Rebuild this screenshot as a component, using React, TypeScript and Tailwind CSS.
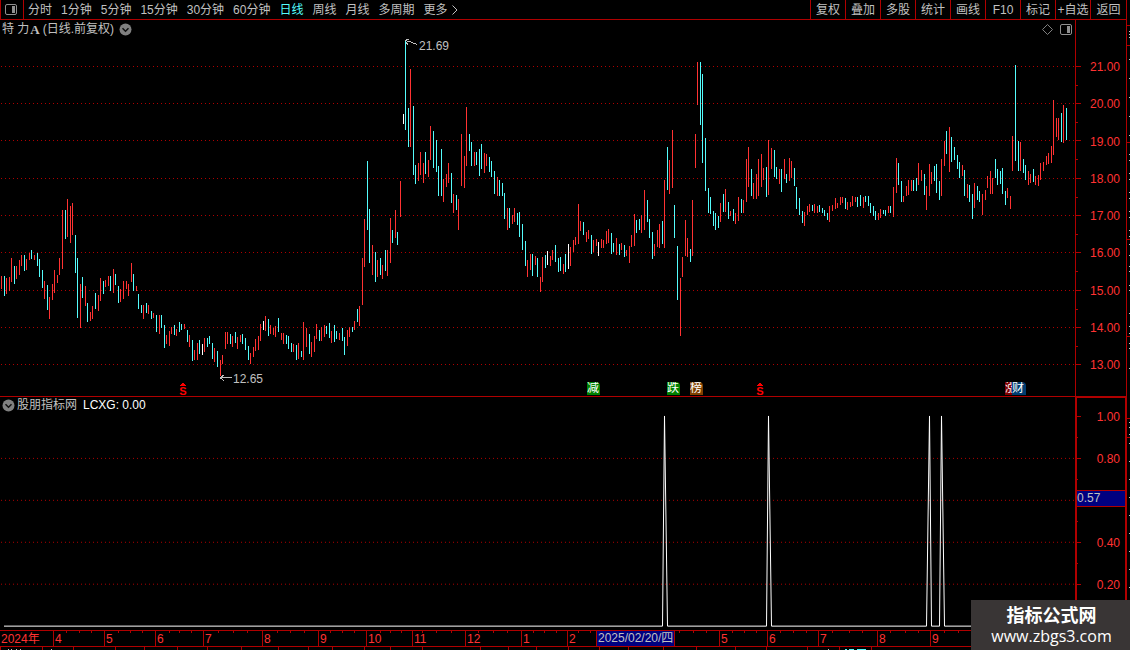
import React from "react";

const PLOT_WIDTH = 1075;
const AXIS_WIDTH = 1126;

const periods = [
  "分时",
  "1分钟",
  "5分钟",
  "15分钟",
  "30分钟",
  "60分钟",
  "日线",
  "周线",
  "月线",
  "多周期",
];

const tools = ["复权", "叠加", "多股", "统计", "画线", "F10", "标记", "+自选", "返回"];

const prices = ["21.00", "20.00", "19.00", "18.00", "17.00", "16.00", "15.00", "14.00", "13.00"];
const priceLines = [66, 103, 140, 178, 215, 252, 290, 327, 364];
const priceHalfTicks = [85, 122, 159, 197, 234, 271, 309, 346];

const signalLines = [458, 500, 542, 584];
const signalHalfTicks = [437, 479, 521, 563, 605];

// x, high, low, r = up / c = down / w = unchanged
const bars = `
1 276 289 r,4 276 296 c,6 278 294 r,9 277 291 r,11 258 282 r,14 266 284 c,16 266 279 r,19 260 275 r,
21 255 266 r,24 255 271 c,26 259 270 r,29 253 260 r,31 250 259 c,34 255 260 r,37 253 266 c,39 259 277 c,
42 270 288 c,44 281 299 r,47 285 310 c,49 297 319 r,52 284 300 r,54 270 293 r,57 275 283 r,59 258 275 r,
62 210 269 r,65 210 239 c,67 199 237 r,70 206 243 r,72 203 235 r,75 235 273 c,77 258 318 c,80 284 328 r,
82 277 298 c,85 286 306 r,87 303 322 c,90 312 321 r,92 306 319 r,95 293 309 c,98 295 311 r,100 278 301 r,
103 281 294 c,105 280 287 r,108 276 286 r,110 276 291 c,113 269 293 r,115 274 285 c,118 286 303 c,120 289 302 r,
123 281 299 r,126 281 289 r,128 284 296 r,131 263 282 r,133 274 291 c,136 286 291 r,138 294 309 c,141 305 313 c,
143 305 319 r,146 303 313 c,148 305 314 r,151 311 319 c,153 313 318 r,156 315 332 c,159 315 334 r,161 315 328 c,
164 325 348 c,166 335 344 r,169 331 346 r,171 327 334 r,174 325 335 c,176 329 336 r,179 322 332 c,181 324 330 c,
184 324 329 r,187 330 342 c,189 335 347 r,192 340 361 c,194 350 360 r,197 343 360 r,199 340 354 c,202 344 355 w,
204 338 352 r,207 338 347 c,209 336 344 c,212 343 359 c,214 348 362 r,217 351 367 c,220 360 376 r,222 355 364 r,
225 332 349 r,227 332 344 r,230 334 344 c,232 336 347 r,235 332 343 c,237 337 349 r,240 335 342 r,242 334 344 c,
245 338 350 c,248 346 360 c,250 353 364 r,253 347 357 r,255 339 351 r,258 336 350 r,260 324 341 r,263 321 330 w,
265 316 331 r,268 319 336 c,270 325 334 r,273 328 335 r,275 326 337 r,278 318 332 c,281 333 340 r,283 333 344 r,
286 335 344 c,288 336 349 c,291 343 352 c,293 344 352 r,296 345 360 c,298 343 359 r,301 351 357 c,303 322 360 r,
306 328 347 r,309 334 354 c,311 342 357 r,314 336 352 r,316 324 339 r,319 330 341 c,321 327 341 r,324 325 337 r,
326 326 334 c,329 323 338 c,331 331 343 r,334 325 342 c,336 331 339 c,339 333 340 r,342 328 341 c,344 337 355 c,
347 330 346 r,349 327 337 r,352 327 332 c,354 321 330 r,357 309 322 c,359 306 326 r,362 258 305 r,364 219 267 r,
367 161 230 c,369 209 263 c,372 245 275 r,375 252 282 c,377 260 277 r,380 258 275 c,382 265 279 r,385 250 271 c,
387 250 276 r,390 218 263 r,392 230 243 c,395 210 238 r,397 232 245 c,400 181 217 r,403 114 124 w,405 41 130 c,
408 108 147 c,410 69 147 r,413 106 175 c,415 165 184 c,418 163 181 r,420 152 175 r,423 163 183 r,425 152 174 c,
428 160 177 r,430 126 160 r,433 131 168 c,436 140 172 c,438 166 196 c,441 149 196 c,443 179 202 r,446 174 187 r,
448 163 183 r,451 173 203 c,453 194 213 r,456 195 210 c,458 199 230 r,461 134 186 r,464 156 188 r,466 107 166 r,
469 134 151 c,471 142 166 c,474 152 166 r,476 152 165 c,479 149 176 c,481 144 169 c,484 153 173 r,486 154 166 r,
489 157 172 c,491 161 177 c,494 171 194 c,497 177 196 r,499 180 196 c,502 183 196 c,504 193 219 c,507 208 230 r,
509 208 228 c,512 215 224 r,514 208 222 r,517 213 225 c,519 212 237 c,522 224 250 c,525 241 266 c,527 260 277 r,
530 254 270 r,532 254 276 c,535 256 265 r,537 258 277 c,540 277 292 r,542 257 282 r,545 255 268 c,547 251 265 w,
550 256 266 r,552 250 260 r,555 245 262 c,558 258 272 c,560 257 271 c,563 264 274 r,565 254 272 c,568 244 269 w,
570 247 266 r,573 240 252 r,575 237 245 r,578 204 244 r,580 221 231 r,583 222 235 c,586 232 242 r,588 230 239 r,
591 235 254 c,593 240 252 r,596 239 246 r,598 242 256 w,601 239 248 r,603 240 248 r,606 231 244 r,608 229 243 r,
611 233 254 c,613 243 252 c,616 238 255 r,619 244 255 c,621 243 250 r,624 245 257 c,626 250 256 r,629 246 263 r,
631 235 247 r,634 214 246 r,636 220 233 c,639 219 230 c,641 215 233 r,644 190 230 r,647 200 222 c,649 219 238 c,
652 232 259 c,654 244 256 r,657 230 247 r,659 224 248 r,662 221 244 c,664 180 248 r,667 147 190 c,669 160 194 r,
672 130 188 r,674 205 238 c,677 246 300 c,680 278 336 r,682 257 277 r,685 220 256 r,687 238 257 r,690 249 262 c,
692 200 256 r,695 134 168 r,697 62 105 r,700 62 125 c,702 74 163 c,705 138 191 c,708 188 213 c,710 197 214 c,
713 211 226 c,715 213 230 c,718 216 228 c,720 203 222 r,723 194 212 c,725 189 212 r,728 202 219 c,730 211 216 r,
733 209 221 c,735 213 224 r,738 197 221 r,741 199 213 c,743 200 213 r,746 159 202 r,748 147 187 r,751 169 196 c,
753 183 199 r,756 174 199 r,758 159 196 r,761 154 187 r,763 168 180 r,766 167 197 c,768 140 195 r,771 148 169 r,
774 150 177 c,776 167 179 c,779 169 184 r,781 169 192 c,784 159 179 r,786 174 183 c,789 158 181 r,791 161 178 r,
794 168 186 c,796 187 209 c,799 198 215 c,802 211 223 c,804 212 226 r,807 206 215 r,809 204 212 r,812 205 211 c,
814 204 213 r,817 206 213 r,819 205 212 c,822 208 213 c,824 210 216 c,827 213 220 c,829 206 222 r,832 205 211 r,
835 198 209 r,837 203 208 r,840 197 205 r,842 197 203 r,845 198 209 c,847 202 210 r,850 202 207 r,852 196 206 r,
855 197 202 r,857 197 207 c,860 195 206 c,863 197 208 r,865 196 202 c,868 196 206 c,870 203 213 c,873 206 216 c,
875 211 220 c,878 213 220 r,880 209 218 r,883 210 214 c,885 210 216 c,888 206 213 r,890 206 213 c,893 187 217 r,
896 158 193 r,898 163 185 c,901 181 202 c,903 196 202 r,906 186 196 r,908 180 195 r,911 180 191 r,913 180 191 c,
916 178 191 c,918 163 185 r,921 170 181 r,924 174 195 c,926 186 210 r,929 164 196 r,931 172 184 r,934 166 181 c,
936 164 193 c,939 181 200 c,941 159 196 r,944 141 166 r,946 131 154 c,949 127 172 r,951 137 162 c,954 147 160 c,
957 155 169 c,959 162 178 c,962 165 176 r,964 170 196 c,967 184 198 r,969 185 202 c,972 194 219 c,974 183 208 r,
977 186 200 c,979 191 202 c,982 194 215 r,985 190 200 r,987 176 188 r,990 171 194 r,992 178 194 r,995 159 178 c,
997 169 185 c,1000 171 184 c,1002 168 194 c,1005 191 205 c,1007 188 198 r,1010 196 209 r,1012 136 171 r,1015 65 161 c,
1018 141 171 c,1020 142 171 r,1023 159 173 c,1025 165 180 c,1028 171 185 r,1030 174 183 r,1033 169 182 c,1035 176 185 r,
1038 175 186 r,1040 163 180 r,1043 162 171 r,1046 156 165 r,1048 153 164 r,1051 146 163 r,1053 100 155 r,1056 118 137 r,
1058 118 140 r,1061 113 142 c,1063 105 143 r,1066 108 140 c`
  .split(",")
  .map((row) => {
    const [x, high, low, kind] = row.trim().split(" ");
    return { x: Number(x), high: Number(high), low: Number(low), kind };
  });

const barFill: Record<string, string> = {
  r: "fill-[#ff3232]",
  c: "fill-[#54fcfc]",
  w: "fill-white",
};

const months = [
  { label: "2024年", start: 0, end: 53 },
  { label: "4", start: 53, end: 104 },
  { label: "5", start: 104, end: 155 },
  { label: "6", start: 155, end: 203 },
  { label: "7", start: 203, end: 262 },
  { label: "8", start: 262, end: 318 },
  { label: "9", start: 318, end: 366 },
  { label: "10", start: 366, end: 412 },
  { label: "11", start: 412, end: 465 },
  { label: "12", start: 465, end: 521 },
  { label: "1", start: 521, end: 567 },
  { label: "2", start: 567, end: 596 },
  { label: "2025/02/20/四", start: 596, end: 674, current: true },
  { label: "", start: 674, end: 719 },
  { label: "5", start: 719, end: 767 },
  { label: "6", start: 767, end: 818 },
  { label: "7", start: 818, end: 877 },
  { label: "8", start: 877, end: 930 },
  { label: "9", start: 930, end: 1126 },
];

const weekTicks = [
  66, 79, 91, 118, 130, 142, 169, 179, 191, 218, 233, 247, 277, 290, 304, 330, 342, 354, 380, 390,
  401, 422, 436, 451, 478, 493, 507, 533, 544, 556, 578, 590, 679, 693, 706, 732, 744, 756, 780, 793,
  806, 832, 849, 862, 890, 905, 918, 944, 958,
];

const footerTicks = [
  0, 42, 73, 115, 144, 177, 207, 241, 278, 308, 332, 364, 390, 422, 480, 508, 536, 568, 599, 628, 663,
  696, 735, 766, 807, 839, 871,
];

const sideLines = [25, 45, 142, 239, 336, 418, 437];
const sideDots = [
  31, 34, 37, 59, 78, 97, 116, 135, 154, 160, 173, 179, 192, 198, 211, 217, 230, 236, 244, 255, 266,
  271, 285, 290, 313, 326, 333, 343, 348, 368, 422, 427, 434, 443, 461, 479, 497, 515, 533, 551, 569,
  587,
];

const badges = [
  { label: "减", x: 587, look: "w-[13px] rounded-tr-sm bg-[#008000]" },
  { label: "跌", x: 667, look: "w-[13px] rounded-tr-sm bg-[#008000]" },
  { label: "榜", x: 690, look: "w-[13px] rounded-tr-sm bg-[#804000]" },
  { label: "涨", x: 1005, look: "w-[7px] bg-[#800000]" },
  { label: "财", x: 1012, look: "w-[14px] rounded-tr-sm bg-[#003c70]" },
];

const left = (x: number) => ({ left: `${(x / PLOT_WIDTH) * 100}%` });

const PanelIcon = () => (
  <svg width="12" height="11" viewBox="0 0 12 11" fill="none">
    <rect x="0.5" y="0.5" width="11" height="10" rx="1.5" stroke="#909090" />
    <rect x="7" y="2" width="3" height="7" fill="#909090" />
  </svg>
);

const CollapseIcon = () => (
  <svg width="13" height="13" viewBox="0 0 13 13" fill="none">
    <circle cx="6.5" cy="6.5" r="6" fill="#808080" />
    <path d="M3.5 5.2 L6.5 8.2 L9.5 5.2" stroke="#101010" strokeWidth="1.5" />
  </svg>
);

const GridLines = ({ rows }: { rows: number[] }) => (
  <>
    {rows.map((y) => (
      <line
        key={y}
        x1="1"
        x2={PLOT_WIDTH}
        y1={y + 0.5}
        y2={y + 0.5}
        stroke="#b00000"
        strokeDasharray="1 3"
      />
    ))}
  </>
);

const Toolbar = () => (
  <header className="flex h-5 shrink-0 justify-between border-b border-[#b00000]">
    <div className="flex">
      <button
        aria-label="侧栏"
        className="flex w-6 items-center border-x border-[#b00000] pl-1"
      >
        <PanelIcon />
      </button>
      <nav className="flex items-center gap-[9px] pl-1 leading-[18px]">
        {periods.map((p) => (
          <button key={p} className={p === "日线" ? "text-[#54fcfc]" : ""}>
            {p}
          </button>
        ))}
        <button className="flex items-center gap-1">
          更多
          <svg width="6" height="10" viewBox="0 0 6 10" fill="none">
            <path d="M0.5 0.5 L5 5 L0.5 9.5" stroke="currentColor" />
          </svg>
        </button>
      </nav>
    </div>
    <nav className="flex leading-[18px]">
      {tools.map((t) => (
        <button
          key={t}
          className="w-[35px] whitespace-nowrap border-l border-[#b00000] text-center last:w-9"
        >
          {t}
        </button>
      ))}
    </nav>
  </header>
);

const DividendMark = ({ x }: { x: number }) => (
  <div
    className="absolute bottom-0 flex w-2 flex-col items-center text-[#ff0000]"
    style={left(x)}
  >
    <svg width="6" height="4" viewBox="0 0 6 4" shapeRendering="crispEdges">
      <path d="M2 0h2v1h1v1h1v1H0V2h1V1h1z" fill="currentColor" />
    </svg>
    <span className="text-[11px] font-bold leading-[9px]">S</span>
  </div>
);

const PricePane = () => (
  <section className="flex min-h-0 flex-[377] border-b border-[#b00000]">
    <div className="relative min-w-0 flex-1">
      <svg
        className="absolute inset-0 h-full w-full"
        viewBox="0 20 1075 376"
        preserveAspectRatio="none"
        shapeRendering="crispEdges"
      >
        <GridLines rows={priceLines} />
        {bars.map((b) => (
          <rect
            key={b.x}
            x={b.x}
            y={b.high}
            width="1"
            height={b.low - b.high}
            className={barFill[b.kind]}
          />
        ))}
        <g fill="none" stroke="#c0c0c0">
          <path d="M405.5 40.5 L411 42 L417 44.5 M409 39.5 H406 M406 42 L408 45" />
          <path d="M220 377.5 H232 M224 374.5 L220.5 377.5 L224 380.5" />
        </g>
      </svg>
      <div className="relative flex h-[19px] items-center justify-between pl-[2px] pr-[3px]">
        <h1 className="flex items-center">
          特&nbsp;力
          <span className="px-px font-['Liberation_Serif'] text-[13px] font-bold">A</span>
          <span className="pl-[2px]">(日线.前复权)</span>
          <button aria-label="展开" className="pl-[5px]">
            <CollapseIcon />
          </button>
        </h1>
        <div className="flex items-center gap-[7px]">
          <svg width="11" height="11" viewBox="0 0 11 11" fill="none">
            <path d="M5.5 0.5 L10.5 5.5 L5.5 10.5 L0.5 5.5 Z" stroke="#808080" />
          </svg>
          <PanelIcon />
        </div>
      </div>
      <span className="absolute top-[18px] leading-4" style={left(419)}>
        21.69
      </span>
      <span className="absolute bottom-[9px] leading-4" style={left(233)}>
        12.65
      </span>
      <DividendMark x={179} />
      <DividendMark x={756} />
      {badges.map((b) => (
        <span
          key={b.x}
          className={`absolute bottom-px h-[13px] overflow-hidden leading-[13px] text-white ${b.look}`}
          style={left(b.x)}
        >
          {b.label}
        </span>
      ))}
    </div>
    <div className="relative flex w-[51px] flex-col items-end justify-between border-l border-[#b00000] pb-[23px] pr-[6px] pt-[39px] leading-4 text-[#ff3232]">
      <svg
        className="absolute left-0 top-0 h-full w-[5px]"
        viewBox="0 20 5 376"
        preserveAspectRatio="none"
        shapeRendering="crispEdges"
        fill="#b00000"
      >
        {priceLines.map((y) => (
          <rect key={y} x="0" y={y} width="5" height="1" />
        ))}
        {priceHalfTicks.map((y) => (
          <rect key={y} x="0" y={y} width="2" height="1" />
        ))}
      </svg>
      {prices.map((p) => (
        <span key={p}>{p}</span>
      ))}
    </div>
  </section>
);

const SignalPane = () => (
  <section className="flex min-h-0 flex-[233]">
    <div className="relative min-w-0 flex-1">
      <svg
        className="absolute inset-0 h-full w-full"
        viewBox="0 397 1075 233"
        preserveAspectRatio="none"
        shapeRendering="crispEdges"
      >
        <GridLines rows={signalLines} />
        <polyline
          fill="none"
          stroke="#ffffff"
          points="4,626.5 662.5,626.5 664.5,416 667.5,626.5 766.5,626.5 768.5,416 771.5,626.5 926.5,626.5 929.5,416 931.5,626.5 939.5,626.5 941.5,416 944.5,626.5 1075,626.5"
          strokeLinejoin="bevel"
        />
      </svg>
      <div className="relative flex h-4 items-center pl-[2px]">
        <button aria-label="收起">
          <CollapseIcon />
        </button>
        <span className="pl-[2px]">股朋指标网</span>
        <span className="pl-[6px] text-white">LCXG: 0.00</span>
      </div>
    </div>
    <div className="relative flex w-[51px] flex-col items-end justify-between border-l-2 border-r border-t border-[#b00000] pb-[37px] pr-[5px] pt-[11px] leading-4 text-[#ff3232]">
      <svg
        className="absolute left-0 top-0 h-full w-1"
        viewBox="0 398 4 232"
        preserveAspectRatio="none"
        shapeRendering="crispEdges"
        fill="#b00000"
      >
        {[416, ...signalLines].map((y) => (
          <rect key={y} x="0" y={y} width="4" height="1" />
        ))}
        {signalHalfTicks.map((y) => (
          <rect key={y} x="0" y={y} width="1" height="1" />
        ))}
      </svg>
      <span>1.00</span>
      <span>0.80</span>
      <span className="h-4" />
      <span>0.40</span>
      <span>0.20</span>
      <output className="absolute inset-x-0 top-[92px] border-y border-[#b00000] bg-[#000080] leading-[15px] text-[#c0c0c0]">
        0.57
      </output>
    </div>
  </section>
);

const TimeAxis = () => (
  <div className="relative flex h-[17px] shrink-0 border-y border-[#b00000] text-[#ff3232]">
    {months.map((m) => (
      <span
        key={m.start}
        className={`shrink-0 whitespace-nowrap border-l border-[#b00000] pl-px first:border-l-0 ${
          m.current ? "bg-[#000080] leading-[15px] text-[#c0c0c0]" : "leading-[17px]"
        }`}
        style={{ width: `${((m.end - m.start) / AXIS_WIDTH) * 100}%` }}
      >
        {m.label}
      </span>
    ))}
    <svg
      className="absolute left-0 top-0 h-[2px] w-full"
      viewBox="0 0 1126 2"
      preserveAspectRatio="none"
      shapeRendering="crispEdges"
      fill="#b00000"
    >
      {weekTicks.map((x) => (
        <rect key={x} x={x} y="0" width="1" height="2" />
      ))}
    </svg>
  </div>
);

const FooterStrip = () => (
  <svg
    className="h-[3px] w-full shrink-0"
    viewBox="0 0 1126 3"
    preserveAspectRatio="none"
    shapeRendering="crispEdges"
  >
    {footerTicks.map((x) => (
      <rect key={x} x={x} y="0" width="1" height="3" fill="#b00000" />
    ))}
    {[8, 11, 16, 20, 51, 828].map((x) => (
      <rect key={x} x={x} y="2" width="1" height="1" fill="#c0c0c0" />
    ))}
    <path d="M845 2h2v1h-2zM849 2h5v1h-5zM857 2h9v1h-9z" fill="#54fcfc" />
  </svg>
);

const SideStrip = () => (
  <aside className="w-1 shrink-0 border-l border-[#b00000]">
    <svg
      className="h-full w-full"
      viewBox="0 0 3 650"
      preserveAspectRatio="none"
      shapeRendering="crispEdges"
    >
      {sideLines.map((y) => (
        <rect key={y} x="0" y={y} width="3" height="1" fill="#b00000" />
      ))}
      {sideDots.map((y) => (
        <rect key={y} x="2" y={y} width="1" height="1" fill="#c0c0c0" />
      ))}
    </svg>
  </aside>
);

const App = () => {
  return (
    <div className="relative flex h-screen w-full overflow-hidden bg-black font-['Liberation_Sans','Noto_Sans_CJK_SC',sans-serif] text-xs text-[#c0c0c0]">
      <main className="flex min-w-0 flex-1 flex-col">
        <Toolbar />
        <PricePane />
        <SignalPane />
        <TimeAxis />
        <FooterStrip />
      </main>
      <SideStrip />
      <div className="absolute bottom-0 right-0 flex h-[50px] w-[159px] flex-col items-center bg-[#393535] pl-[2px] pt-1 text-white">
        <span className="text-lg font-bold leading-6">指标公式网</span>
        <a href="#" className="font-['Open_Sans',sans-serif] text-base leading-4">
          www.zbgs3.com
        </a>
      </div>
    </div>
  );
};

export default App;
